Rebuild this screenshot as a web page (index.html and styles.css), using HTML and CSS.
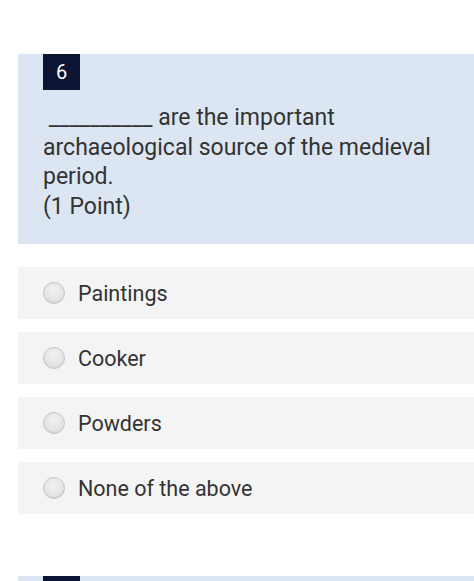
FILE: index.html
```html
<!DOCTYPE html>
<html>
<head>
<meta charset="utf-8">
<link rel="stylesheet" href="styles.css">
</head>
<body>
<div class="page">
  <section class="question">
    <div class="badge">6</div>
    <div class="qtext">&nbsp;__________ are the important archaeological source of the medieval period.<br>(1 Point)</div>
  </section>
  <div class="options">
    <label class="option"><span class="radio"></span><span class="otext">Paintings</span></label>
    <label class="option"><span class="radio"></span><span class="otext">Cooker</span></label>
    <label class="option"><span class="radio"></span><span class="otext">Powders</span></label>
    <label class="option"><span class="radio"></span><span class="otext">None of the above</span></label>
  </div>
  <section class="question next">
    <div class="badge"></div>
  </section>
</div>
</body>
</html>
```
FILE: styles.css
```css
html, body {
  margin: 0;
  padding: 0;
  background: #ffffff;
}
body {
  font-family: Roboto, "Noto Sans", sans-serif;
  color: #333333;
  width: 474px;
  height: 581px;
  overflow: hidden;
}
.page {
  padding-top: 54px;
  padding-left: 18px;
}
.question {
  background: #dce6f2;
  padding: 0 20px 23px 25px;
}
.badge {
  width: 37px;
  height: 36px;
  background: #0c1533;
  color: #ffffff;
  font-size: 20px;
  display: flex;
  align-items: center;
  justify-content: center;
}
.qtext {
  margin-top: 13px;
  font-size: 23px;
  line-height: 29.5px;
  color: #333333;
}
.options {
  display: flex;
  flex-direction: column;
  gap: 13px;
  margin-top: 23px;
}
.option {
  height: 52px;
  background: #f4f4f4;
  display: flex;
  align-items: center;
  padding-left: 25px;
}
.radio {
  width: 20px;
  height: 20px;
  border-radius: 50%;
  border: 1px solid #c6c6c6;
  background: radial-gradient(circle at 50% 35%, #f2f2f2 0%, #e2e2e2 70%, #d6d6d6 100%);
  box-shadow: inset 0 -1px 1px rgba(0,0,0,0.06);
  flex: none;
}
.otext {
  margin-left: 13px;
  font-size: 21.5px;
  color: #333333;
}
.question.next {
  margin-top: 62px;
  padding-bottom: 0;
  height: 6px;
}
.question.next .badge {
  height: 6px;
}
```
